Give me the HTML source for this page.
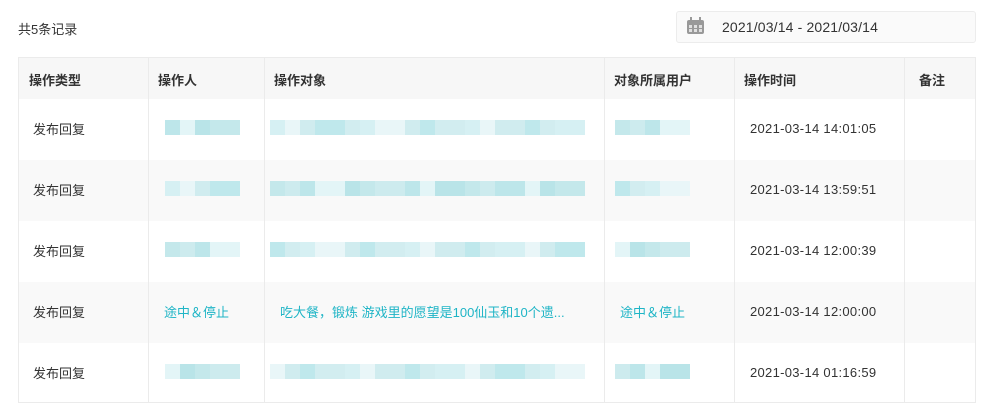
<!DOCTYPE html>
<html><head><meta charset="utf-8"><style>
*{margin:0;padding:0;box-sizing:border-box}
body{width:984px;height:416px;background:#fff;font-family:"Liberation Sans","Noto Sans CJK SC",sans-serif;font-size:13px;color:#333;position:relative;overflow:hidden}
.a{position:absolute;white-space:nowrap}
.tbl{position:absolute;left:18px;top:57px;width:958px;height:346px;border:1px solid #ebebeb}
.row{position:absolute;left:0;width:956px;height:61px}
.vl{position:absolute;top:0;width:1px;height:344px;background:#ebebeb}
.bar{position:absolute;height:15px;display:flex}
.bar i{display:block;width:15px;height:15px}
.t{color:#1fb5c6}
.tm{letter-spacing:0.3px}
</style></head><body>
<div class="a" style="left:18px;top:19px">共5条记录</div>
<div class="a" style="left:676px;top:11px;width:300px;height:32px;border:1px solid #ececec;border-radius:3px;background:#fafafa"></div>
<div class="a" style="left:687px;top:20px;width:17px;height:14px;background:#999;border-radius:2px"></div>
<div class="a" style="left:690px;top:17px;width:2px;height:5px;background:#999"></div>
<div class="a" style="left:699px;top:17px;width:2px;height:5px;background:#999"></div>
<div class="a" style="left:689px;top:25px;width:13px;height:7px;background:repeating-linear-gradient(90deg,#e0e0e0 0 3px,transparent 3px 5px)"></div>
<div class="a" style="left:689px;top:28px;width:13px;height:1px;background:#999"></div>
<div class="a" style="left:722px;top:19px;font-size:14px;letter-spacing:0.15px">2021/03/14 - 2021/03/14</div>

<div class="tbl">
<div class="row" style="top:0;height:41px;background:#f7f7f7"></div>
<div class="row" style="top:102px;background:#f9f9f9"></div>
<div class="row" style="top:224px;background:#f9f9f9"></div>
<div class="vl" style="left:129px"></div>
<div class="vl" style="left:245px"></div>
<div class="vl" style="left:585px"></div>
<div class="vl" style="left:715px"></div>
<div class="vl" style="left:885px"></div>
</div>
<div class="a" style="left:29px;top:70px;font-weight:bold">操作类型</div>
<div class="a" style="left:158px;top:70px;font-weight:bold">操作人</div>
<div class="a" style="left:274px;top:70px;font-weight:bold">操作对象</div>
<div class="a" style="left:614px;top:70px;font-weight:bold">对象所属用户</div>
<div class="a" style="left:744px;top:70px;font-weight:bold">操作时间</div>
<div class="a" style="left:919px;top:70px;font-weight:bold">备注</div>

<div id="rows"></div>
<script>
var times=["14:01:05","13:59:51","12:00:39","12:00:00","01:16:59"];
var cs=["#bde6ea","#d6f0f3","#c4e8eb","#bfe8ec","#e3f5f7","#e9f6f8","#cdebee","#d2edf0","#b9e4e8","#d0ecef"];
function bar(x,y,n,s){var h='<div class="bar" style="left:'+x+'px;top:'+y+'px">';for(var i=0;i<n;i++)h+='<i style="background:'+cs[(i*3+s+ (i%4))%cs.length]+'"></i>';return h+'</div>';}
var h='';
for(var r=0;r<5;r++){var c=128+61*r;var ty=c-9;
h+='<div class="a" style="left:33px;top:'+ty+'px">发布回复</div>';
if(r==3){
h+='<div class="a t" style="left:164px;top:'+ty+'px">途中＆停止</div>';
h+='<div class="a t" style="left:280px;top:'+ty+'px">吃大餐，锻炼 游戏里的愿望是100仙玉和10个遗...</div>';
h+='<div class="a t" style="left:620px;top:'+ty+'px">途中＆停止</div>';
}else{
h+=bar(165,c-8,5,r)+bar(270,c-8,21,r+1)+bar(615,c-8,5,r+2);
}
h+='<div class="a tm" style="left:750px;top:'+(ty+2)+'px">2021-03-14 '+times[r]+'</div>';
}
document.getElementById('rows').innerHTML=h;
</script>
</body></html>
